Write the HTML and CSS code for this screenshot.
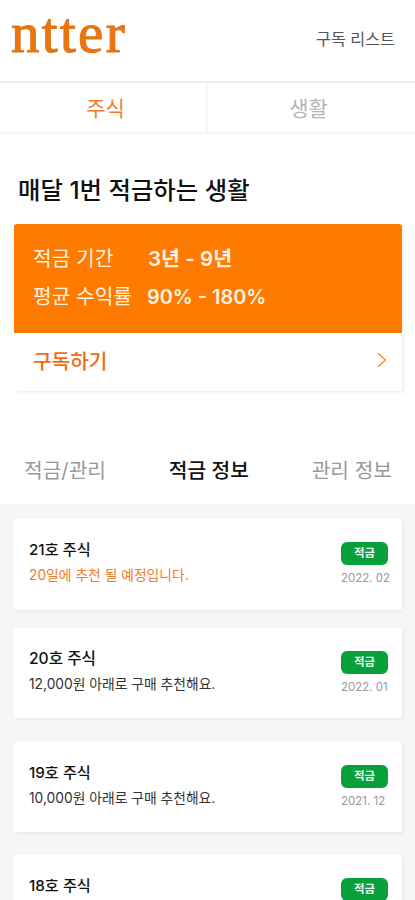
FILE: index.html
```html
<!DOCTYPE html>
<html lang="ko">
<head>
<meta charset="utf-8">
<meta name="viewport" content="width=device-width, initial-scale=1">
<title>ntter</title>
<link rel="stylesheet" href="styles.css">
</head>
<body>
<header class="header">
  <a class="logo">ntter</a>
  <a class="header-link">구독 리스트</a>
</header>
<nav class="category">
  <a class="category-item active">주식</a>
  <a class="category-item">생활</a>
</nav>
<main>
  <h1 class="title">매달 1번 적금하는 생활</h1>
  <section class="plan">
    <dl class="plan-info">
      <dt>적금 기간</dt><dd class="period">3년 - 9년</dd>
      <dt>평균 수익률</dt><dd class="rate">90% - 180%</dd>
    </dl>
    <a class="subscribe"><span>구독하기</span>
      <svg class="chevron" width="10" height="16" viewBox="0 0 10 16"><path d="M1.2 1.2 8.2 8 1.2 14.8"/></svg>
    </a>
  </section>
  <nav class="tabs">
    <a class="tab">적금/관리</a>
    <a class="tab active">적금 정보</a>
    <a class="tab">관리 정보</a>
  </nav>
  <section class="list">
    <article class="card first">
      <div><h2 class="name">21호 주식</h2><p class="desc upcoming">20일에 추천 될 예정입니다.</p></div>
      <div class="meta"><span class="badge">적금</span><time class="date">2022. 02</time></div>
    </article>
    <article class="card second">
      <div><h2 class="name wide">20호 주식</h2><p class="desc">12,000원 아래로 구매 추천해요.</p></div>
      <div class="meta"><span class="badge">적금</span><time class="date">2022. 01</time></div>
    </article>
    <article class="card">
      <div><h2 class="name">19호 주식</h2><p class="desc">10,000원 아래로 구매 추천해요.</p></div>
      <div class="meta"><span class="badge">적금</span><time class="date">2021. 12</time></div>
    </article>
    <article class="card">
      <div><h2 class="name">18호 주식</h2></div>
      <div class="meta"><span class="badge">적금</span></div>
    </article>
  </section>
</main>
</body>
</html>
```
FILE: styles.css
```css
* { box-sizing: border-box; margin: 0; padding: 0; }
body {
  height: 900px;
  overflow: hidden;
  background: #fff;
  color: #111;
  font-family: Inter, "Noto Sans CJK KR", sans-serif;
  white-space: nowrap;
}
.header {
  display: flex;
  justify-content: space-between;
  height: 83px;
  padding: 0 20px 0 11px;
  border-bottom: 2px solid #eee;
}
.logo {
  font: 57px/65px "Liberation Serif", serif;
  letter-spacing: 2.3px;
  color: #e87511;
  -webkit-text-stroke: 1.1px #e87511;
}
.header-link { padding-top: 27px; font-size: 16.2px; line-height: 24px; color: #555; }
.category { display: flex; height: 51px; border-bottom: 2px solid #f5f5f5; }
.category-item {
  flex: 1;
  text-align: center;
  font-size: 21px;
  line-height: 51px;
  color: #b5b5b5;
}
.category-item + .category-item { padding-right: 6px; border-left: 2px solid #f6f6f6; }
.category .active { padding-left: 5px; color: #ee7d32; }
.title {
  height: 51px;
  margin: 38px 0 1px 18px;
  font-size: 24.4px;
  font-weight: 500;
  line-height: 36px;
}
.plan {
  width: 388px;
  height: 167px;
  margin-left: 14px;
  border-radius: 3px;
  background: #fff;
  box-shadow: 2px 2px 3px rgba(0, 0, 0, .06);
}
.plan-info {
  display: grid;
  grid-template-columns: 114px auto;
  grid-auto-rows: 38px;
  height: 109px;
  padding: 16px 0 0 19px;
  border-radius: 3px 3px 0 0;
  background: #ff7b00;
  color: #fff3e6;
  font-size: 20.3px;
  line-height: 38px;
}
.plan-info dd { font-weight: 600; }
.plan-info .period { padding-left: 1px; font-size: 20.6px; }
.plan-info .rate { font-size: 19.9px; }
.subscribe {
  display: flex;
  align-items: center;
  justify-content: space-between;
  height: 54px;
  padding: 0 15px 0 19px;
  font-size: 20.2px;
  font-weight: 500;
  color: #ee6d16;
}
.chevron { fill: none; stroke: #f18a3a; stroke-width: 1.4; }
.tabs {
  display: flex;
  justify-content: space-between;
  height: 113px;
  padding: 61px 23px 0 24px;
  font-size: 20.3px;
  line-height: 38px;
  color: #999;
}
.tabs .active { color: #111; font-weight: 500; }
.list {
  display: flex;
  flex-direction: column;
  gap: 23px;
  height: 397px;
  padding: 15px 13px 0 14px;
  background: #f6f6f6;
  overflow: hidden;
}
.card {
  display: flex;
  flex: none;
  justify-content: space-between;
  height: 90px;
  padding: 18px 11px 0 15px;
  background: #fff;
  border-radius: 2px;
  box-shadow: 2px 2px 3px rgba(0, 0, 0, .045);
}
.card.first { height: 91px; margin-bottom: -5px; }
.card.second { margin-bottom: 1px; }
.name { font-size: 15.2px; font-weight: 500; line-height: 25px; }
.name.wide { font-size: 15.6px; }
.desc { font-size: 13.8px; line-height: 26px; color: #333; }
.upcoming { color: #ee7c2b; }
.meta { display: flex; flex-direction: column; width: 50px; padding-top: 5px; }
.badge {
  width: 47px;
  height: 23px;
  border-radius: 6px;
  background: #08a03a;
  color: #e9f8ed;
  font-size: 11.5px;
  font-weight: 600;
  line-height: 22px;
  text-align: center;
}
.date { font-size: 11.5px; line-height: 27px; color: #999; }
```
